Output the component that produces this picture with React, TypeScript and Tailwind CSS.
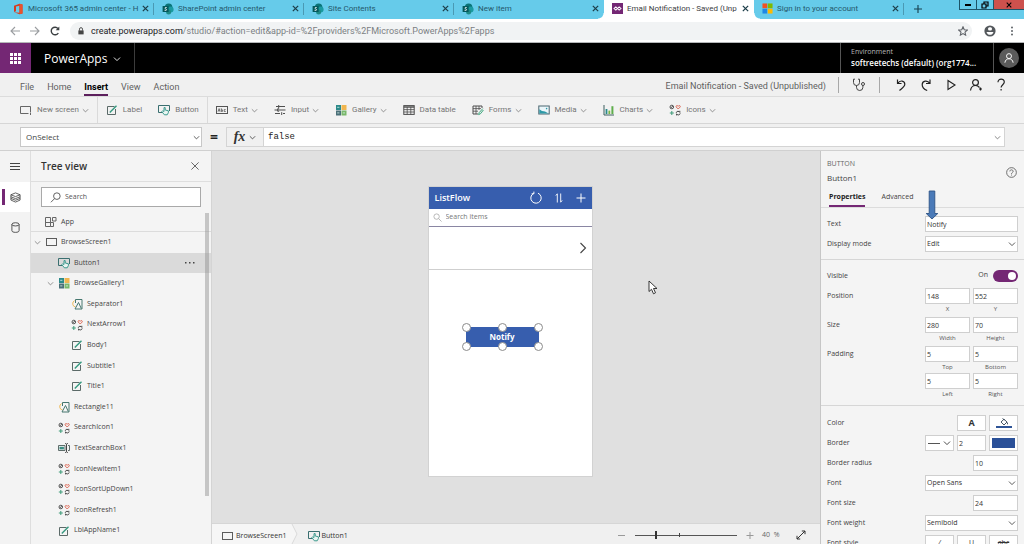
import React from "react";
import type { ReactNode } from "react";

type IconProps = { className?: string };

/* ---------- icons ---------- */

const Chevron = ({ className = "w-2 h-2" }: IconProps) => (
  <svg viewBox="0 0 10 10" className={className} fill="none" stroke="currentColor" strokeWidth="1.1" aria-hidden="true">
    <path d="M1.2 3.2 5 7l3.8-3.8" />
  </svg>
);

const CloseX = ({ className = "w-[7px] h-[7px]" }: IconProps) => (
  <svg viewBox="0 0 10 10" className={className} fill="none" stroke="currentColor" strokeWidth="1.8" aria-hidden="true">
    <path d="m1.2 1.2 7.6 7.6M8.8 1.2 1.2 8.8" />
  </svg>
);

const OfficeIcon = () => (
  <svg viewBox="0 0 12 12" className="w-3 h-3 shrink-0" aria-hidden="true">
    <path d="M2 2.8 7.6.8l2.9.8v8.8l-2.9.8L2 9.2l5.4.5V2.7L4 3.5v4.7L2 9z" fill="#d83b1f" />
    <path d="M7.6.8l2.9.8v8.8l-2.9.8z" fill="#e8532f" />
  </svg>
);

const SharePointIcon = () => (
  <svg viewBox="0 0 12 12" className="w-3 h-3 shrink-0" aria-hidden="true">
    <circle cx="6.6" cy="4.2" r="3.8" fill="#0a7377" />
    <circle cx="8.6" cy="6.6" r="3" fill="#1a9ba1" />
    <circle cx="6.6" cy="9" r="2.5" fill="#1c8a86" />
    <rect x=".6" y="3" width="6" height="6" rx=".6" fill="#03585c" />
    <path d="M4.7 4.6c-1.6-.7-2.4.8-1.1 1.3 1.7.5 1 2.1-1 1.4" stroke="#fff" strokeWidth=".9" fill="none" />
  </svg>
);

const PowerAppsIcon = () => (
  <svg viewBox="0 0 12 12" className="w-[11px] h-[11px] shrink-0" aria-hidden="true">
    <rect width="12" height="12" fill="#742774" />
    <path d="M6 6 4.2 4.2 2.2 6l2 1.8L7.8 4.2 9.8 6l-2 1.8z" fill="none" stroke="#fff" strokeWidth="1.1" />
  </svg>
);

const MicrosoftIcon = () => (
  <svg viewBox="0 0 12 12" className="w-[11px] h-[11px] shrink-0" aria-hidden="true">
    <path d="M.5.5h5.2v5.2H.5z" fill="#f25022" />
    <path d="M6.3.5h5.2v5.2H6.3z" fill="#7fba00" />
    <path d="M.5 6.3h5.2v5.2H.5z" fill="#1e88e5" />
    <path d="M6.3 6.3h5.2v5.2H6.3z" fill="#ffb900" />
  </svg>
);

const ScreenIcon = () => (
  <svg viewBox="0 0 12 12" className="w-3 h-3 shrink-0" fill="none" stroke="#5c5c5c" aria-hidden="true">
    <rect x="1.5" y="2.5" width="10" height="7" />
  </svg>
);

const NewScreenIcon = () => (
  <svg viewBox="0 0 12 12" className="w-3 h-3 shrink-0" fill="none" stroke="#666" aria-hidden="true">
    <path d="M8.5 9.5H.5v-7h10V8M10.500 8.500v2.500" />
  </svg>
);

const LabelIcon = () => (
  <svg viewBox="0 0 12 12" className="w-3 h-3 shrink-0" fill="none" aria-hidden="true">
    <path d="M8.500 2.500h-7v8h8V5" stroke="#5b6a68" />
    <path d="M10.500 1.800 5 7.300 3.800 8.500" stroke="#35997f" strokeWidth="1.400" />
  </svg>
);

const ButtonIcon = () => (
  <svg viewBox="0 0 12 12" className="w-3 h-3 shrink-0" fill="none" aria-hidden="true">
    <path d="M4 8.500H.5v-7h11V7" stroke="#3a6f70" />
    <path d="M6 3.600v3.900L4.600 6.800l-.8.8 2.600 3.200h2.800l1.200-2.200V6.800L7.200 6V3.600z" stroke="#2a9183" fill="#e9f5f2" strokeWidth=".9" />
  </svg>
);

const TextIcon = () => (
  <svg viewBox="0 0 12 12" className="w-3 h-3 shrink-0" fill="none" stroke="#555" aria-hidden="true">
    <rect x=".5" y="2.500" width="11" height="7" />
    <path d="M2 7.600 3.100 4.600l1 3M2.500 6.800h1.300M5.300 4.300v3.200h1.100V5.800H5.300M9.700 5.600H8.200v1.900h1.500" strokeWidth=".8" />
  </svg>
);

const InputIcon = () => (
  <svg viewBox="0 0 12 12" className="w-3 h-3 shrink-0" fill="none" stroke="#4f4f4f" aria-hidden="true">
    <path d="M2 2.500h9M.5 6h3M6 6h5.500M1 9.500h5M9 9.500h2" />
    <path d="M4.700 1v3.200M5 4.800v2.400H3.600V4.800zM7.700 8.200v2.800" />
  </svg>
);

const GalleryIcon = () => (
  <svg viewBox="0 0 12 12" className="w-3 h-3 shrink-0" aria-hidden="true">
    <path d="M1 1h5v5H1z" fill="#2b8a8a" />
    <path d="M6.500 1h5v5h-5z" fill="#f0b64f" />
    <path d="M1 6.500h5v5H1z" fill="#4a6f78" />
    <path d="M6.500 6.500h5v5h-5z" fill="#79b86a" />
    <path d="M2.200 3.300h2.200M2.200 8.900h2.200M7.800 8.900H10" stroke="#d8f0ea" strokeWidth=".8" />
  </svg>
);

const TableIcon = () => (
  <svg viewBox="0 0 12 12" className="w-3 h-3 shrink-0" fill="none" stroke="#4d4d4d" aria-hidden="true">
    <rect x=".8" y="1.600" width="10.400" height="8.800" />
    <path d="M.8 3h10.400" strokeWidth="1.400" />
    <path d="M.8 5.600h10.400M.8 8h10.400M4.200 3v7.400M7.800 3v7.400" strokeWidth=".8" />
  </svg>
);

const FormsIcon = () => (
  <svg viewBox="0 0 12 12" className="w-3 h-3 shrink-0" fill="none" stroke="#4d4d4d" aria-hidden="true">
    <path d="M6 10H1V2h9v2" />
    <path d="M1 4.600h8M1 7.200h5M4 2v8M7 2v4" strokeWidth=".8" />
    <path d="m10.800 4.600-3.600 4-.6 2 1.800-.8 3-3.800" stroke="#3aa57c" />
  </svg>
);

const MediaIcon = () => (
  <svg viewBox="0 0 12 12" className="w-3 h-3 shrink-0" aria-hidden="true">
    <rect x=".8" y="2" width="10.400" height="8" fill="#eaf6fa" stroke="#4a6670" />
    <path d="M1.300 9.500V5.200L4 7l3 .6 3.600 1.900z" fill="#2d9aa8" />
    <circle cx="8.600" cy="4.600" r=".8" fill="#2d9aa8" />
  </svg>
);

const ChartIcon = () => (
  <svg viewBox="0 0 12 12" className="w-3 h-3 shrink-0" aria-hidden="true">
    <path d="M1 1v10h10" stroke="#3d5f5f" fill="none" />
    <path d="M2.600 5h1.800v5H2.600z" fill="#2b8a8a" />
    <path d="M5.400 6.600h1.800V10H5.400z" fill="#7ab648" />
    <path d="M8.400 2.200h2V10h-2z" fill="#5fae4c" />
  </svg>
);

const IconsIcon = () => (
  <svg viewBox="0 0 12 12" className="w-3 h-3 shrink-0" fill="none" aria-hidden="true">
    <circle cx="2.800" cy="3" r="1.800" stroke="#555" />
    <path d="m1.600 4.200 2.400-2.400" stroke="#555" />
    <path d="M9.200 5 7.200 3c-.6-1.500 1.400-2 2-.7.600-1.300 2.600-.8 2 .7z" stroke="#d9604c" strokeWidth=".9" />
    <path d="M2.800 7v4M.8 9h4" stroke="#3e9b78" />
    <path d="M7.200 8.800c.3-1.900 3-2 3.600-.4V6.800M11.200 9.400c-.3 1.900-3 2-3.600.4v1.600" stroke="#444" />
  </svg>
);

const ShapeIcon = () => (
  <svg viewBox="0 0 12 12" className="w-3 h-3 shrink-0" fill="none" aria-hidden="true">
    <path d="M4.500 9A3.400 3.400 0 0 1 3.600 2.600" stroke="#eebb5c" />
    <path d="M4.500 5V1.500h6.500v9.500H4L7.500 4.500l2.800 6" stroke="#46776f" />
  </svg>
);

const TextBoxIcon = () => (
  <svg viewBox="0 0 12 12" className="w-3 h-3 shrink-0" fill="none" aria-hidden="true">
    <path d="M7 3.500H.5v5H7zM10 3.500h1.500v5H10" stroke="#5e6d6b" />
    <path d="M1.500 4.800h4.400v2.600H1.500z" fill="#3b8f83" />
    <path d="M7 1.500c1 0 1.500.3 1.500 1v7c0 .7-.5 1-1.500 1M10 1.500c-1 0-1.500.3-1.500 1m0 7c0 .7.500 1 1.500 1" stroke="#444" />
  </svg>
);

const AppIcon = () => (
  <svg viewBox="0 0 12 12" className="w-3 h-3 shrink-0" fill="none" stroke="#666" aria-hidden="true">
    <path d="M.5 1.500h5v9h-5zM.5 6.500h8v4h-3M7.500 1.500h3.500v3.500H7.500z" />
  </svg>
);

const Person = ({ className }: IconProps) => (
  <svg viewBox="0 0 14 14" className={className} fill="none" stroke="currentColor" strokeWidth="1.1" aria-hidden="true">
    <circle cx="7" cy="4.800" r="2.900" />
    <path d="M2.200 12.500C2.600 9.400 4.600 7.900 7 7.900s4.400 1.500 4.800 4.600" />
  </svg>
);

/* ---------- browser chrome ---------- */

const browserTabs: { title: string; icon: ReactNode; active?: boolean; sep?: boolean }[] = [
  { title: "Microsoft 365 admin center - H", icon: <OfficeIcon />, sep: true },
  { title: "SharePoint admin center", icon: <SharePointIcon />, sep: true },
  { title: "Site Contents", icon: <SharePointIcon />, sep: true },
  { title: "New item", icon: <SharePointIcon /> },
  { title: "Email Notification - Saved (Unp", icon: <PowerAppsIcon />, active: true },
  { title: "Sign in to your account", icon: <MicrosoftIcon />, sep: true },
];

const activeTab =
  "relative bg-white text-[#3c4043] " +
  "before:absolute before:-left-1.5 before:bottom-0 before:h-1.5 before:w-1.5 before:bg-[radial-gradient(circle_at_0_0,transparent_5px,white_6px)] " +
  "after:absolute after:-right-1.5 after:bottom-0 after:h-1.5 after:w-1.5 after:bg-[radial-gradient(circle_at_100%_0,transparent_5px,white_6px)]";

function BrowserTabs() {
  return (
    <div className="flex h-[19px] shrink-0 bg-[#66cbea] pl-1 font-[Roboto,sans-serif]">
      {browserTabs.map((t) => (
        <div
          key={t.title}
          className={"flex w-[150px] min-w-0 items-center pb-0.5 pl-2 " + (t.active ? activeTab : "text-[#25586a]")}
        >
          {t.icon}
          <span className="ml-1 min-w-0 flex-1 whitespace-nowrap text-[8px] leading-3">
            {t.title}
          </span>
          <button aria-label={"Close " + t.title} className="flex w-4 justify-center text-[#1e3f4a]">
            <CloseX />
          </button>
          <span className={"h-3 w-px " + (t.sep ? "bg-[#4a99b3]" : "")} />
        </div>
      ))}
      <button aria-label="New tab" className="flex w-7 items-center justify-center pb-0.5 text-[#16414f]">
        <svg viewBox="0 0 10 10" className="h-2 w-2" stroke="currentColor" strokeWidth="1.400">
          <path d="M5 0v10M0 5h10" />
        </svg>
      </button>
      <div className="ml-auto flex h-2.5 border-b border-l border-[#1d5468] text-black">
        <button aria-label="Minimize" className="flex w-[17px] items-center justify-center border-r border-[#1d5468]">
          <span className="h-0.5 w-1.5 bg-black" />
        </button>
        <button aria-label="Restore" className="flex w-[17px] items-center justify-center border-r border-[#1d5468]">
          <svg viewBox="0 0 8 8" className="h-2 w-2" fill="none" stroke="currentColor" strokeWidth="1.200">
            <path d="M1 3h4v4H1zM3 3V1h4v4H5" />
          </svg>
        </button>
        <button aria-label="Close" className="flex w-[30px] items-center justify-center bg-[#cd514d]">
          <CloseX className="h-1.5 w-1.5" />
        </button>
      </div>
    </div>
  );
}

function AddressBar() {
  return (
    <div className="flex h-6 shrink-0 items-center border-b border-[#b5b7b9] bg-white pl-2 pr-1 text-[#5f6368]">
      <button aria-label="Back" className="flex w-5 pl-0.5 text-[#9a9da0]">
        <svg viewBox="0 0 10 10" className="h-2.5 w-2.5" fill="none" stroke="currentColor" strokeWidth="1.100">
          <path d="M10 5H1M5 1 1 5l4 4" />
        </svg>
      </button>
      <button aria-label="Forward" className="flex w-5 pl-0.5 text-[#9a9da0]">
        <svg viewBox="0 0 10 10" className="h-2.5 w-2.5" fill="none" stroke="currentColor" strokeWidth="1.100">
          <path d="M0 5h9M5 1l4 4-4 4" />
        </svg>
      </button>
      <button aria-label="Reload" className="flex w-5 pl-0.5 text-[#3c4043]">
        <svg viewBox="0 0 10 10" className="h-2.5 w-2.5" fill="none" stroke="currentColor" strokeWidth="1.400">
          <path d="M8.300 7A3.800 3.800 0 1 1 8 2.600" />
          <path d="M9.300.6v3.600H5.700z" fill="currentColor" stroke="none" />
        </svg>
      </button>
      <div className="ml-0.5 flex h-[18px] flex-1 items-center rounded-full bg-[#f1f3f4] px-2">
        <svg viewBox="0 0 8 10" className="h-2 w-1.5" fill="none" aria-hidden="true">
          <path d="M2 4.500V2.500a2 2 0 0 1 4 0v2" stroke="#444" strokeWidth="1.200" />
          <rect x=".5" y="4.200" width="7" height="5.300" fill="#444" />
        </svg>
        <span className="ml-[7px] flex-1 font-[Roboto,sans-serif] text-[9px] leading-3 text-[#7b7f83]">
          <span className="text-[#202124]">create.powerapps.com</span>
          /studio/#action=edit&amp;app-id=%2Fproviders%2FMicrosoft.PowerApps%2Fapps
        </span>
        <button aria-label="Bookmark" className="-mr-1">
          <svg viewBox="0 0 12 12" className="h-2.5 w-2.5" fill="none" stroke="currentColor" strokeWidth="1.300">
            <path d="m6 1 1.500 3.400 3.700.4-2.800 2.500.8 3.700L6 9.100 2.800 11l.8-3.700L.8 4.800l3.700-.4z" />
          </svg>
        </button>
      </div>
      <button aria-label="Profile" className="ml-3">
        <svg viewBox="0 0 12 12" className="h-3 w-3">
          <circle cx="6" cy="6" r="5.600" fill="#54585c" />
          <rect x="4" y="2.300" width="4" height="3.200" rx="1.500" fill="#fff" />
          <path d="M2.500 7h7c-.6 2-2 2.800-3.500 2.800S3.100 9 2.500 7z" fill="#fff" />
        </svg>
      </button>
      <button aria-label="Browser menu" className="ml-2 flex w-4 justify-center">
        <svg viewBox="0 0 4 12" className="h-2.5 w-1" fill="currentColor">
          <circle cx="2" cy="1.800" r="1.200" />
          <circle cx="2" cy="6" r="1.200" />
          <circle cx="2" cy="10.200" r="1.200" />
        </svg>
      </button>
    </div>
  );
}

/* ---------- studio header ---------- */

function StudioHeader() {
  return (
    <header className="flex h-[30px] shrink-0 items-stretch bg-black text-white">
      <button aria-label="App launcher" className="flex w-[31px] items-center justify-center bg-[#742774]">
        <svg viewBox="0 0 11 11" className="h-[11px] w-[11px]" fill="#fff">
          <path d="M0 0h3v3H0zM4 0h3v3H4zM8 0h3v3H8zM0 4h3v3H0zM4 4h3v3H4zM8 4h3v3H8zM0 8h3v3H0zM4 8h3v3H4zM8 8h3v3H8z" />
        </svg>
      </button>
      <button className="flex items-center gap-1.5 border-r border-[#3c3c3c] pl-[13px] pr-[13px] pt-0.5">
        <span className="text-[12px] leading-4">PowerApps</span>
        <Chevron />
      </button>
      <div className="flex-1" />
      <div className="flex w-[153px] flex-col justify-center border-l border-[#555] pl-2.5">
        <span className="text-[7px] leading-[10px] text-[#b4b4b4]">Environment</span>
        <span className="whitespace-nowrap text-[8px] font-semibold leading-3">softreetechs (default) (org1774...</span>
      </div>
      <button aria-label="Account" className="flex w-[31px] items-center justify-center border-l border-[#555]">
        <span className="flex h-5 w-5 items-center justify-center rounded-full bg-[#5b5b5b]">
          <Person className="h-3 w-3" />
        </span>
      </button>
    </header>
  );
}

const menuItems = ["File", "Home", "Insert", "View", "Action"];

function MenuBar() {
  return (
    <div className="flex h-6 shrink-0 items-center border-b border-[#dcdcdc] bg-[#f0f0f0] pl-5 font-[Roboto,sans-serif] text-[9px] text-[#606060]">
      <nav className="flex gap-[13px] pt-1.5">
        {menuItems.map((m) => (
          <button
            key={m}
            className={
              "border-b-2 leading-[14px] " +
              (m === "Insert" ? "border-[#5c1f5c] font-bold text-black" : "border-transparent")
            }
          >
            {m}
          </button>
        ))}
      </nav>
      <span className="ml-auto pt-1">Email Notification - Saved (Unpublished)</span>
      <div className="ml-3 flex h-4 w-[42px] items-center justify-center border-x border-[#a8a8a8]">
        <button aria-label="App checker">
          <svg viewBox="0 0 14 14" className="h-3.5 w-3.5" fill="none" stroke="#444" strokeWidth="1">
            <path d="M3 1.200H1.500v3.300a3 3 0 0 0 6 0V1.200H6M4.500 7.500v1.800a3.200 3.200 0 0 0 6.400 0V7.500" />
            <circle cx="11" cy="6" r="1.500" />
          </svg>
        </button>
      </div>
      <div className="flex items-center gap-[11px] pl-3.5 pr-4 text-[#222]">
        <button aria-label="Undo">
          <svg viewBox="0 0 14 14" className="h-3.5 w-3.5" fill="none" stroke="currentColor" strokeWidth="1.200">
            <path d="M3.500 1.500v4h4M3.700 5.300C6 1.800 10.800 2.500 10.800 6.200c0 2.300-2.600 4-5.300 6.300" />
          </svg>
        </button>
        <button aria-label="Redo">
          <svg viewBox="0 0 14 14" className="h-3.5 w-3.5" fill="none" stroke="currentColor" strokeWidth="1.200">
            <path d="M11 1.500v4H7M10.800 5.300C8.500 1.800 3.200 2.500 3.200 6.700c0 2.800 2 4.600 5 5.800" />
          </svg>
        </button>
        <button aria-label="Preview the app">
          <svg viewBox="0 0 14 14" className="h-3.5 w-3.5" fill="none" stroke="currentColor" strokeWidth="1.100">
            <path d="M4 2.500 11 7l-7 4.500z" />
          </svg>
        </button>
        <button aria-label="Share">
          <svg viewBox="0 0 14 14" className="h-3.5 w-3.5" fill="none" stroke="currentColor" strokeWidth="1.200">
            <circle cx="6.500" cy="4.500" r="2.900" />
            <path d="M1.500 12.500C2 9.200 4 7.500 6.500 7.500c1.800 0 3 .8 4 2" />
            <path d="M11.500 9.500v3M10 11h3" />
          </svg>
        </button>
        <button aria-label="Help">
          <svg viewBox="0 0 14 14" className="h-3.5 w-3.5" fill="none" stroke="currentColor" strokeWidth="1.200">
            <path d="M4 4.200C4 0 10.300.2 10.300 4c0 2.600-3.200 2.800-3.200 5.500M7.100 11v1.600" />
          </svg>
        </button>
      </div>
    </div>
  );
}

const ribbon: { label: string; icon: ReactNode; menu?: boolean; sep?: boolean }[] = [
  { label: "New screen", icon: <NewScreenIcon />, menu: true, sep: true },
  { label: "Label", icon: <LabelIcon /> },
  { label: "Button", icon: <ButtonIcon />, sep: true },
  { label: "Text", icon: <TextIcon />, menu: true },
  { label: "Input", icon: <InputIcon />, menu: true },
  { label: "Gallery", icon: <GalleryIcon />, menu: true },
  { label: "Data table", icon: <TableIcon /> },
  { label: "Forms", icon: <FormsIcon />, menu: true },
  { label: "Media", icon: <MediaIcon />, menu: true },
  { label: "Charts", icon: <ChartIcon />, menu: true },
  { label: "Icons", icon: <IconsIcon />, menu: true },
];

function Ribbon() {
  return (
    <div className="flex h-[27px] shrink-0 border-b border-[#d6d6d6] bg-[#f2f2f2] pl-3 font-[Roboto,sans-serif] text-[8px] text-[#757575]">
      {ribbon.map((r) => (
        <button
          key={r.label}
          className={"flex items-center px-2 " + (r.sep ? "border-r border-[#dadada]" : "")}
        >
          {r.icon}
          <span className="ml-[5px] whitespace-nowrap">{r.label}</span>
          {r.menu && <Chevron className="ml-[3px] h-[7px] w-[7px]" />}
        </button>
      ))}
    </div>
  );
}

function FormulaBar() {
  return (
    <div className="flex h-[27px] shrink-0 items-center border-b border-[#d0d0d0] bg-[#f0f0f0] pl-5 pr-[19px]">
      <div className="relative flex h-5 w-[182px] items-center">
        <select
          aria-label="Property"
          defaultValue="OnSelect"
          className="h-5 w-full appearance-none border border-[#c8c8c8] bg-white pl-[5px] text-[8px] text-[#444]"
        >
          <option>OnSelect</option>
        </select>
        <Chevron className="pointer-events-none absolute right-0.5 h-[7px] w-[7px] text-[#333]" />
      </div>
      <span className="w-6 text-center text-[14px] font-bold leading-4 text-[#222]">=</span>
      <button
        aria-label="Formula functions"
        className="flex h-5 w-[38px] items-center justify-center gap-1 border border-[#d4d4d4] text-[#333]"
      >
        <span className="font-['Liberation_Serif',serif] text-[14px] font-bold italic leading-4">fx</span>
        <Chevron className="h-[7px] w-[7px]" />
      </button>
      <div className="relative flex flex-1 items-center">
        <input
          aria-label="Formula"
          defaultValue="false"
          className="h-5 w-full border border-l-0 border-[#d4d4d4] bg-white pl-1 font-['Liberation_Mono',monospace] text-[9px] text-[#222]"
        />
        <Chevron className="pointer-events-none absolute right-1 h-[7px] w-[7px] text-[#666]" />
      </div>
    </div>
  );
}

/* ---------- left side ---------- */

function Rail() {
  return (
    <div className="flex w-[31px] shrink-0 flex-col border-r border-[#dedede] bg-[#f3f3f3] text-[#444]">
      <button aria-label="Expand menu" className="flex h-[31px] items-center justify-center">
        <svg viewBox="0 0 10 8" className="h-2 w-2.5" stroke="currentColor" strokeWidth="1">
          <path d="M0 .5h10M0 3.500h10M0 6.500h10" />
        </svg>
      </button>
      <button aria-label="Tree view" className="flex h-[30px] items-center bg-white">
        <span className="ml-0.5 h-4 w-[3px] bg-[#742774]" />
        <svg viewBox="0 0 12 12" className="ml-[5px] h-[11px] w-[11px]" fill="none" stroke="currentColor">
          <path d="m6 1 5 2-5 2-5-2zM1 3v5.800l5 2.200 5-2.200V3M1 5.200l5 2 5-2M1 7l5 2 5-2" strokeWidth=".9" />
        </svg>
      </button>
      <button aria-label="Data sources" className="flex h-[30px] items-center justify-center">
        <svg viewBox="0 0 10 12" className="h-[11px] w-[9px]" fill="none" stroke="currentColor">
          <ellipse cx="5" cy="2.500" rx="4" ry="1.800" />
          <path d="M1 2.500v7c0 1.200 1.700 1.900 4 1.900s4-.7 4-1.900v-7" />
        </svg>
      </button>
    </div>
  );
}

type Node = { name: string; level: 0 | 1 | 2; icon: ReactNode; open?: boolean; selected?: boolean };

const tree: Node[] = [
  { name: "BrowseScreen1", level: 0, icon: <ScreenIcon />, open: true },
  { name: "Button1", level: 1, icon: <ButtonIcon />, selected: true },
  { name: "BrowseGallery1", level: 1, icon: <GalleryIcon />, open: true },
  { name: "Separator1", level: 2, icon: <ShapeIcon /> },
  { name: "NextArrow1", level: 2, icon: <IconsIcon /> },
  { name: "Body1", level: 2, icon: <LabelIcon /> },
  { name: "Subtitle1", level: 2, icon: <LabelIcon /> },
  { name: "Title1", level: 2, icon: <LabelIcon /> },
  { name: "Rectangle11", level: 1, icon: <ShapeIcon /> },
  { name: "SearchIcon1", level: 1, icon: <IconsIcon /> },
  { name: "TextSearchBox1", level: 1, icon: <TextBoxIcon /> },
  { name: "IconNewItem1", level: 1, icon: <IconsIcon /> },
  { name: "IconSortUpDown1", level: 1, icon: <IconsIcon /> },
  { name: "IconRefresh1", level: 1, icon: <IconsIcon /> },
  { name: "LblAppName1", level: 1, icon: <LabelIcon /> },
];

const indent = ["pl-[3px]", "pl-4", "pl-[29px]"];

function TreeView() {
  return (
    <aside className="flex w-[180px] shrink-0 flex-col bg-[#f4f4f4] text-[#444]">
      <div className="flex h-[31px] shrink-0 items-center justify-between border-b border-[#dedede] pl-2.5 pr-3">
        <h2 className="text-[10px] font-semibold leading-4 text-[#333]">Tree view</h2>
        <button aria-label="Close tree view">
          <svg viewBox="0 0 10 10" className="h-2 w-2" stroke="#444" strokeWidth="1">
            <path d="m.5.5 9 9M9.500.5l-9 9" />
          </svg>
        </button>
      </div>
      <div className="px-2.5 pt-[5px]">
        <label className="flex h-5 items-center border border-[#a9a9a9] bg-white pl-2">
          <svg viewBox="0 0 12 12" className="h-[11px] w-[11px] shrink-0" fill="none" stroke="#555" aria-hidden="true">
            <circle cx="7.500" cy="4.500" r="3.600" />
            <path d="M5 7.200 1 11.200" />
          </svg>
          <input
            aria-label="Search"
            placeholder="Search"
            className="ml-1 w-full bg-transparent text-[7px] outline-none placeholder:text-[#555]"
          />
        </label>
      </div>
      <div className="relative flex min-h-0 flex-1 flex-col pb-[3px]">
        <button className="flex h-[25px] shrink-0 items-center border-b border-[#dcdcdc] pl-3.5 pt-1.5 text-[7px]">
          <AppIcon />
          <span className="ml-1">App</span>
        </button>
        <ul className="flex flex-1 flex-col text-[7px]">
          {tree.map((n) => (
            <li key={n.name} className={"flex flex-1 items-center " + indent[n.level] + (n.selected ? " bg-[#dadada]" : "")}>
              <span className="flex w-[11px] shrink-0 text-[#777]">{n.open && <Chevron className="h-[7px] w-[7px]" />}</span>
              {n.icon}
              <button className="ml-1">{n.name}</button>
              {n.selected && (
                <button aria-label="More actions" className="ml-auto mr-4">
                  <svg viewBox="0 0 10 2" className="h-0.5 w-2.5" fill="#444">
                    <path d="M0 0h1.500v1.500H0zM4 0h1.500v1.500H4zM8 0h1.500v1.500H8z" />
                  </svg>
                </button>
              )}
            </li>
          ))}
        </ul>
        <span className="absolute bottom-12 right-0.5 top-1.5 w-1 bg-[#8c8c8c]/45" />
      </div>
    </aside>
  );
}

/* ---------- canvas ---------- */

const handles = [
  "-left-1 -top-1",
  "left-8 -top-1",
  "-right-1 -top-1",
  "-left-1 -bottom-1",
  "left-8 -bottom-1",
  "-right-1 -bottom-1",
];

function PhoneScreen() {
  return (
    <div className="flex h-[291px] w-[165px] flex-col border border-[#d2d2d2] bg-white">
      <div className="flex h-[22px] items-center bg-[#375eae] pl-1.5 pr-1.5 text-white">
        <span className="flex-1 text-[9px] font-semibold leading-3">ListFlow</span>
        <svg viewBox="0 0 14 14" className="h-3.5 w-3.5" fill="none" stroke="#fff" strokeWidth="1">
          <path d="M9 2.200a5.200 5.200 0 1 1-4.400.2M4.900.6v2.200H2.600" />
        </svg>
        <svg viewBox="0 0 10 10" className="ml-[11px] h-2.5 w-2.5" fill="none" stroke="#fff" strokeWidth=".9">
          <path d="M3.300 9.500V.8L1.800 2.600M6.700.5v8.700l1.500-1.800" />
        </svg>
        <svg viewBox="0 0 10 10" className="ml-3 h-2.5 w-2.5" stroke="#fff" strokeWidth="1">
          <path d="M5 .5v9M.5 5h9" />
        </svg>
      </div>
      <label className="flex h-[18px] items-center border-b border-[#8a86a3] pl-1">
        <svg viewBox="0 0 10 10" className="h-[9px] w-[9px] shrink-0" fill="none" stroke="#aaa" strokeWidth=".9">
          <circle cx="4" cy="4" r="3" />
          <path d="m6.200 6.200 3.300 3.300" />
        </svg>
        <input
          aria-label="Search items"
          placeholder="Search items"
          className="ml-1 w-full bg-transparent text-[7px] outline-none placeholder:text-[#777]"
        />
      </label>
      <div className="flex h-[43px] items-center justify-end border-b border-[#cfcfcf] pr-[5px]">
        <svg viewBox="0 0 8 12" className="h-3 w-2" fill="none" stroke="#444" strokeWidth="1.100">
          <path d="m1.500 1 5 5-5 5" />
        </svg>
      </div>
      <div className="flex justify-center pr-4 pt-[57px]">
        <div className="relative flex">
          <button className="h-5 w-[73px] bg-[#375eae] text-[8px] font-bold text-white">Notify</button>
          {handles.map((h) => (
            <span key={h} className={"absolute h-[9px] w-[9px] rounded-full border border-[#8b8b8b] bg-white " + h} />
          ))}
        </div>
      </div>
    </div>
  );
}

function Canvas() {
  return (
    <main className="flex min-w-0 flex-1 flex-col border-l border-[#d4d4d4]">
      <div className="relative flex flex-1 justify-center bg-[#e0e0e0] pr-3 pt-[35px]">
        <PhoneScreen />
        <svg viewBox="0 0 10 15" className="absolute left-[436px] top-[129px] h-[15px] w-2.5" aria-hidden="true">
          <path d="M1 1v10.500l2.500-2.200 2 4.500 2-1-2-4.300H9z" fill="#fff" stroke="#222" strokeWidth=".9" />
        </svg>
      </div>
      <div className="flex h-[21px] shrink-0 items-stretch border-t border-[#d6d6d6] bg-[#f0f0f0] text-[7px] text-[#333]">
        <button className="flex items-center gap-[3px] bg-[#f6f6f6] pl-[9px] pr-1 pt-1">
          <ScreenIcon />
          BrowseScreen1
        </button>
        <svg viewBox="0 0 8 20" className="h-5 w-2" aria-hidden="true">
          <path d="M0 0h1l5 10-5 10H0z" fill="#f6f6f6" />
          <path d="m1 0 5 10-5 10" fill="none" stroke="#d9d9d9" />
        </svg>
        <button className="ml-[9px] flex items-center gap-0.5 pt-1">
          <ButtonIcon />
          Button1
        </button>
        <div className="ml-auto flex items-center pr-3.5 pt-0.5">
          <button aria-label="Zoom out">
            <svg viewBox="0 0 8 8" className="h-2 w-2" stroke="#999">
              <path d="M0 4.500h7" />
            </svg>
          </button>
          <div className="relative ml-[9px] flex h-3 w-[102px] items-center">
            <span className="h-px w-full bg-[#555]" />
            <span className="absolute left-11 h-1 w-px bg-[#444]" />
            <input
              type="range"
              aria-label="Zoom"
              min={10}
              max={160}
              defaultValue={40}
              className="absolute inset-0 w-full appearance-none bg-transparent [&::-webkit-slider-thumb]:h-2 [&::-webkit-slider-thumb]:w-0.5 [&::-webkit-slider-thumb]:appearance-none [&::-webkit-slider-thumb]:bg-[#333]"
            />
          </div>
          <button aria-label="Zoom in" className="ml-[9px]">
            <svg viewBox="0 0 8 8" className="h-2 w-2" stroke="#999">
              <path d="M.5 4.500h7M4 1v7" />
            </svg>
          </button>
          <span className="ml-2 w-[22px] whitespace-nowrap text-[#666]">40&nbsp; %</span>
          <button aria-label="Fit to window" className="ml-3">
            <svg viewBox="0 0 10 10" className="h-2.5 w-2.5" fill="none" stroke="#333" strokeWidth="1">
              <path d="M1 9 9 1M5.800 1H9v3.200M4.200 9H1V5.800" />
            </svg>
          </button>
        </div>
      </div>
    </main>
  );
}

/* ---------- properties ---------- */

const box = "h-4 border border-[#cfcfcf] bg-white text-[7px] text-[#333]";

function Row({ label, id, children }: { label: string; id?: string; children: ReactNode }) {
  return (
    <div className="flex h-5 items-center justify-between">
      <label htmlFor={id}>{label}</label>
      <div className="flex gap-[3px]">{children}</div>
    </div>
  );
}

function Drop({ id, value }: { id: string; value: string }) {
  return (
    <div className="relative flex items-center">
      <select id={id} defaultValue={value} className={box + " w-[93px] appearance-none pl-px"}>
        <option>{value}</option>
      </select>
      <Chevron className="pointer-events-none absolute right-0.5 h-2 w-2" />
    </div>
  );
}

function Pair({ label, fields }: { label: string; fields: [string, string][] }) {
  return (
    <div className="flex justify-between">
      <span className="leading-4">{label}</span>
      <div className="flex gap-[3px]">
        {fields.map(([name, value]) => (
          <label key={name} className="flex flex-col items-center text-[6px] leading-[11px] text-[#555]">
            <input defaultValue={value} className={box + " w-[45px] pl-px"} />
            {name}
          </label>
        ))}
      </div>
    </div>
  );
}

function Properties() {
  return (
    <aside className="relative flex w-[204px] shrink-0 flex-col overflow-hidden border-l border-[#c6c6c6] bg-[#f4f4f4] text-[7px] text-[#444]">
      <div className="flex items-center justify-between pl-1.5 pr-[7px] pt-[7px]">
        <div>
          <p className="leading-3 text-[#666]">BUTTON</p>
          <h2 className="text-[8px] leading-4">Button1</h2>
        </div>
        <button aria-label="Help about this control">
          <svg viewBox="0 0 12 12" className="h-[11px] w-[11px]" fill="none" stroke="#555" strokeWidth=".9">
            <circle cx="6" cy="6" r="5.300" />
            <path d="M4.200 4.800c0-2.300 3.600-2.200 3.600 0C7.800 6 6 6 6 7.500M6 8.300v1" />
          </svg>
        </button>
      </div>
      <div role="tablist" className="flex gap-4 border-b border-[#dcdcdc] pl-2 pt-[3px]">
        <button role="tab" aria-selected="true" className="border-b-2 border-[#742774] pb-px font-bold leading-[15px] text-[#222]">
          Properties
        </button>
        <button role="tab" aria-selected="false" className="border-b-2 border-transparent pb-px leading-[15px]">
          Advanced
        </button>
      </div>

      <section className="border-b border-[#d6d6d6] px-1.5 pb-[5px] pt-1.5">
        <Row label="Text" id="text">
          <input id="text" defaultValue="Notify" className={box + " w-[93px] pl-px"} />
        </Row>
        <Row label="Display mode" id="mode">
          <Drop id="mode" value="Edit" />
        </Row>
      </section>

      <section className="flex flex-col border-b border-[#d6d6d6] px-1.5 pb-[5px] pt-1.5">
        <Row label="Visible" id="visible">
          <span>On</span>
          <span className="relative ml-0.5 flex h-3 w-[25px] items-center rounded-full bg-[#742774]">
            <input id="visible" type="checkbox" defaultChecked className="absolute inset-0 h-full w-full appearance-none" />
            <span className="ml-auto mr-0.5 h-2 w-2 rounded-full bg-white" />
          </span>
        </Row>
        <div className="flex flex-col gap-0.5 pt-0.5">
          <Pair label="Position" fields={[["X", "148"], ["Y", "552"]]} />
          <Pair label="Size" fields={[["Width", "280"], ["Height", "70"]]} />
          <div>
            <Pair label="Padding" fields={[["Top", "5"], ["Bottom", "5"]]} />
            <Pair label="" fields={[["Left", "5"], ["Right", "5"]]} />
          </div>
        </div>
      </section>

      <section className="px-1.5 pt-[7px]">
        <Row label="Color">
          <button aria-label="Text color" className={box + " w-[29px] text-[9px] font-bold leading-3"}>
            A
          </button>
          <button aria-label="Fill color" className={box + " flex w-[29px] flex-col items-center justify-center"}>
            <svg viewBox="0 0 10 8" className="h-2 w-2.5" fill="none" stroke="#345" strokeWidth=".9">
              <path d="m2 4 3-2.800L8 4 5 7zM3.500.5l2 1.500M8.500 4.500v1.800" />
            </svg>
            <span className="h-0.5 w-4 bg-[#2f5597]" />
          </button>
        </Row>
        <Row label="Border" id="border-width">
          <button aria-label="Border style" className={box + " flex w-[29px] items-center justify-between px-0.5"}>
            <span className="h-px w-3 bg-[#555]" />
            <Chevron />
          </button>
          <input id="border-width" defaultValue="2" className={box + " w-[29px] pl-px"} />
          <button aria-label="Border color" className={box + " flex w-[29px] items-center justify-center p-0.5"}>
            <span className="h-full w-full bg-[#2a5098]" />
          </button>
        </Row>
        <Row label="Border radius" id="radius">
          <input id="radius" defaultValue="10" className={box + " w-[45px] pl-px"} />
        </Row>
        <Row label="Font" id="font">
          <Drop id="font" value="Open Sans" />
        </Row>
        <Row label="Font size" id="size">
          <input id="size" defaultValue="24" className={box + " w-[45px] pl-px"} />
        </Row>
        <Row label="Font weight" id="weight">
          <Drop id="weight" value="Semibold" />
        </Row>
        <Row label="Font style">
          <button aria-label="Italic" className={box + " w-[29px] italic"}>/</button>
          <button aria-label="Underline" className={box + " w-[29px] underline"}>U</button>
          <button aria-label="Strikethrough" className={box + " w-[29px] line-through"}>abc</button>
        </Row>
      </section>

      <svg viewBox="0 0 14 30" className="absolute left-[104px] top-[39px] h-[30px] w-3.5" aria-hidden="true">
        <path d="M4.200 1h5.600v22.500h3L7 29 1.200 23.500h3z" fill="#4a7ab8" stroke="#2e5486" strokeWidth=".9" />
      </svg>
    </aside>
  );
}

export default function App() {
  return (
    <div className="flex h-screen flex-col overflow-hidden bg-[#f0f0f0] font-['Open_Sans','Noto_Sans',sans-serif]">
      <BrowserTabs />
      <AddressBar />
      <StudioHeader />
      <MenuBar />
      <Ribbon />
      <FormulaBar />
      <div className="flex min-h-0 flex-1">
        <Rail />
        <TreeView />
        <Canvas />
        <Properties />
      </div>
    </div>
  );
}
